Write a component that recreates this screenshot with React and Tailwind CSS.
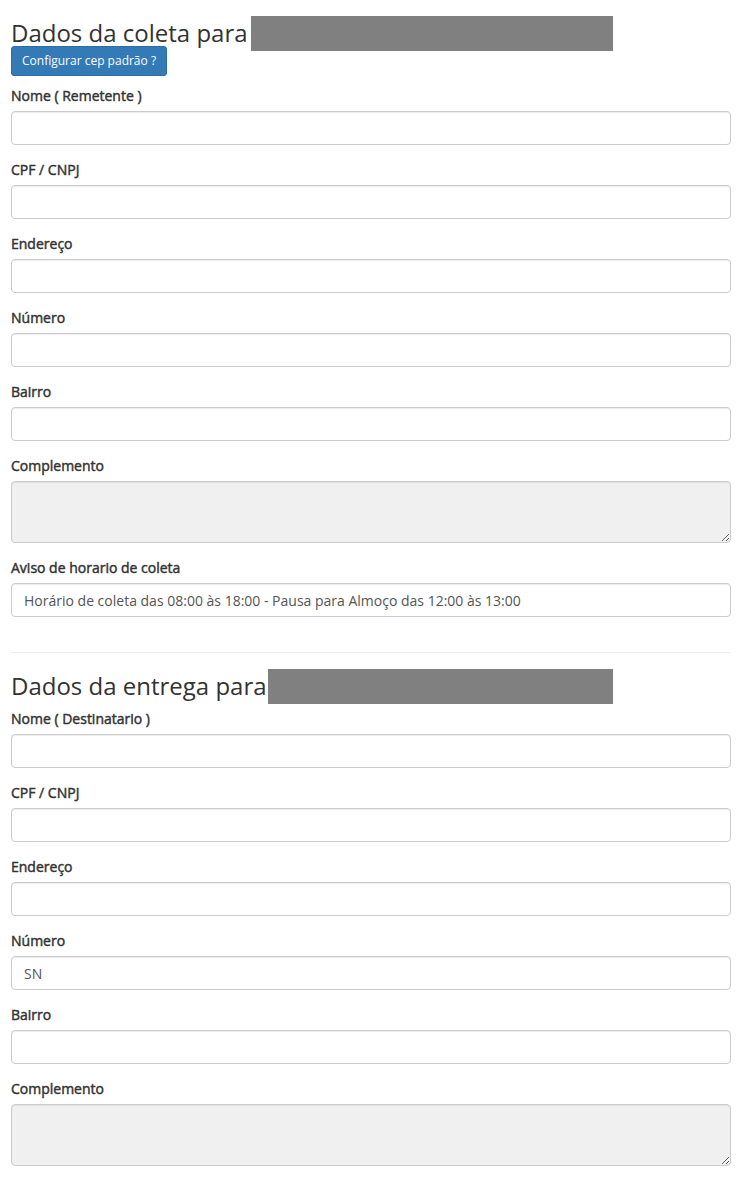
import React from 'react';

const font = { fontFamily: '"Open Sans", "Liberation Sans", sans-serif' };

// labels look like regular-width glyphs drawn a bit heavier
const labelCls =
  'block mb-[5px] text-[14px] leading-[20px] font-normal text-[#333] [-webkit-text-stroke:0.45px_#333]';

const Field = ({ label, value = '' }) => (
  <div className="mb-[15px]">
    <label className={labelCls}>{label}</label>
    <input
      type="text"
      defaultValue={value}
      className="block w-full h-[34px] px-[12px] py-[6px] text-[14px] leading-[20px] text-[#555] bg-white border border-[#ccc] rounded-[4px] shadow-[inset_0_1px_1px_rgba(0,0,0,0.075)] outline-none"
    />
  </div>
);

const AreaField = ({ label }) => (
  <div className="mb-[15px]">
    <label className={labelCls}>{label}</label>
    <textarea
      readOnly
      className="block w-full h-[62px] px-[12px] py-[6px] text-[14px] leading-[20px] text-[#555] bg-[#f0f0f0] border border-[#ccc] rounded-[4px] shadow-[inset_0_1px_1px_rgba(0,0,0,0.075)] outline-none"
    />
  </div>
);

const Heading = ({ text, boxWidth, gap }) => (
  <div className="flex items-center h-[26px] text-[24px] leading-[26px] text-[#333] whitespace-nowrap">
    <span>{text}</span>
    <span className={`h-[35px] bg-[#808080] ${gap}`} style={{ width: boxWidth }}></span>
  </div>
);

export default function App() {
  return (
    <div className="bg-white min-h-[1178px] pl-[11px] pr-[14px]" style={font}>
      {/* Coleta */}
      <div className="pt-[20px]">
        <Heading text="Dados da coleta para" boxWidth={362} gap="ml-[3px]" />
        <button className="h-[30px] px-[10px] text-[12px] leading-[18px] text-white bg-[#337ab7] border border-[#2e6da4] rounded-[3px]">
          Configurar cep padrão ?
        </button>
      </div>
      <div className="mt-[10px]">
        <Field label="Nome ( Remetente )" />
        <Field label="CPF / CNPJ" />
        <Field label="Endereço" />
        <Field label="Número" />
        <Field label="Bairro" />
        <AreaField label="Complemento" />
        <Field
          label="Aviso de horario de coleta"
          value="Horário de coleta das 08:00 às 18:00 - Pausa para Almoço das 12:00 às 13:00"
        />
      </div>

      <hr className="mt-[35px] mb-[20px] border-0 border-t border-[#eee]" />

      {/* Entrega */}
      <div className="mb-[10px]">
        <Heading text="Dados da entrega para" boxWidth={345} gap="ml-[1px]" />
      </div>
      <div>
        <Field label="Nome ( Destinatario )" />
        <Field label="CPF / CNPJ" />
        <Field label="Endereço" />
        <Field label="Número" value="SN" />
        <Field label="Bairro" />
        <AreaField label="Complemento" />
      </div>
    </div>
  );
}
